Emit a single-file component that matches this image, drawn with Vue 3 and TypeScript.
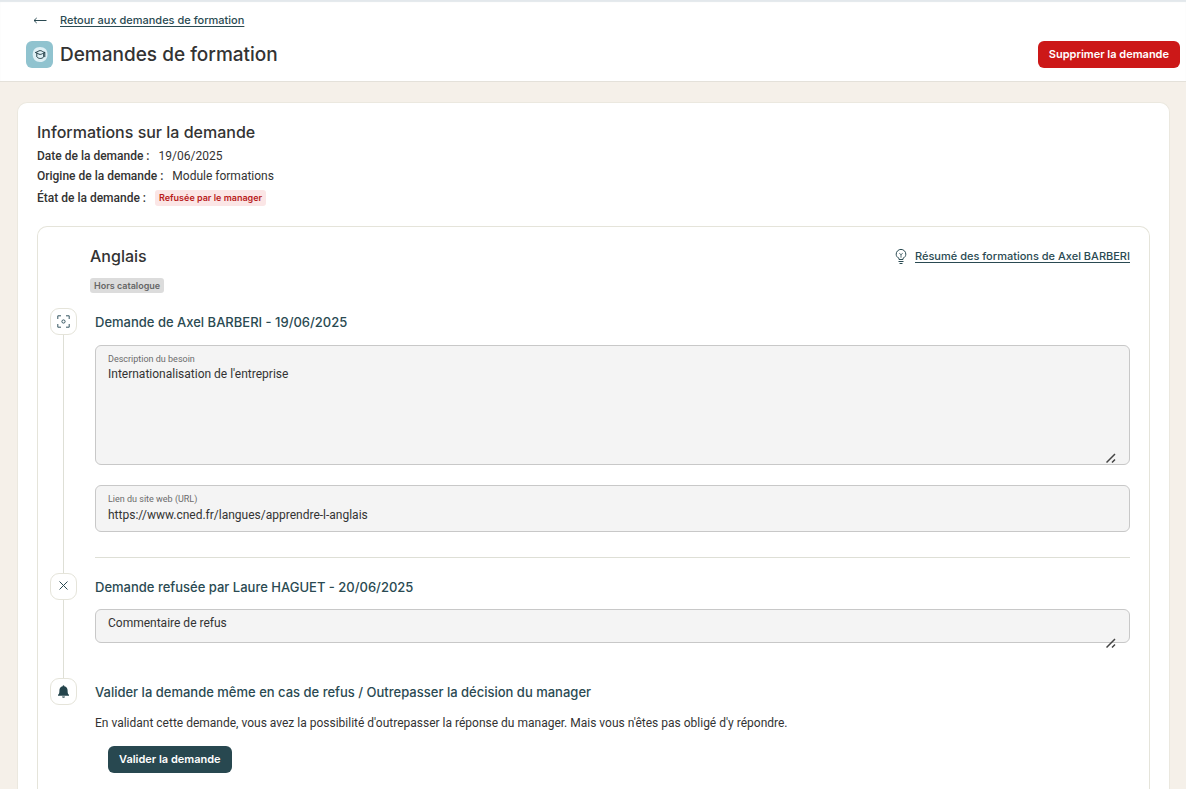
<script setup lang="ts">
interface Info {
  label: string
  value: string
  tag?: boolean
}

const infos: Info[] = [
  { label: 'Date de la demande :', value: '19/06/2025' },
  { label: 'Origine de la demande :', value: 'Module formations' },
  { label: 'État de la demande :', value: 'Refusée par le manager', tag: true },
]
</script>

<template>
  <div class="page">
    <header class="header">
      <nav class="back">
        <svg width="14" height="9" viewBox="0 0 14 9" fill="none" stroke="#2a4a52" aria-hidden="true">
          <path d="M13.500 4.500H1M3.700 2L1 4.500l2.700 2.500" />
        </svg>
        <a href="#">Retour aux demandes de formation</a>
      </nav>
      <div class="title-row">
        <span class="logo">
          <svg width="27" height="27" viewBox="0 0 27 27" fill="none" aria-hidden="true">
            <path d="M14 6c4.800 0 7.500 3 7.500 7.400S18.600 21 14 21s-7.300-3-7.300-7.500S9.200 6 14 6z" fill="#dff0f5" />
            <path d="M9.300 11.500c2.500-.5 3.200-1.900 4.900-1.900s2.400 1.400 4.800 1.900c-2.300.5-3 1.900-4.800 1.900s-2.500-1.400-4.900-1.900z" stroke="#243f47" stroke-linejoin="round" />
            <path d="M10.800 12.500v3.400c1.900 2.100 5.100 2.100 6.900 0v-3.400M18.800 11.500v4.200" stroke="#243f47" stroke-linecap="round" />
          </svg>
        </span>
        <h1>Demandes de formation</h1>
        <button type="button" class="btn danger">Supprimer la demande</button>
      </div>
    </header>

    <main class="card">
      <h2>Informations sur la demande</h2>
      <dl class="infos">
        <div v-for="info in infos" :key="info.label" class="info">
          <dt>{{ info.label }}</dt>
          <dd :class="{ refused: info.tag }">{{ info.value }}</dd>
        </div>
      </dl>

      <section class="request">
        <div class="request-head">
          <h2>Anglais</h2>
          <a href="#" class="summary">
            <svg width="12" height="16" viewBox="0 0 12 16" fill="none" stroke="#2a4a52" aria-hidden="true">
              <path d="M4 11.500V10.300C2.200 9.500 1.200 8 1.200 6.200a4.800 4.800 0 0 1 9.600 0c0 1.800-1 3.300-2.800 4.100v1.200zM3.500 13.500h5M4.500 15.500h3" />
              <path d="M4.300 5.300L6 6.700l1.700-1.400M6 6.700v3" stroke-width=".8" />
            </svg>
            <span>Résumé des formations de Axel BARBERI</span>
          </a>
        </div>
        <span class="catalog">Hors catalogue</span>

        <ol class="steps">
          <li class="step">
            <div class="rail">
              <span class="marker">
                <svg width="13" height="13" viewBox="0 0 13 13" fill="none" stroke="#365661" aria-hidden="true">
                  <path d="M.8 4V.8H4M9 .8h3.200V4M12.200 9v3.200H9M4 12.200H.8V9" />
                  <circle cx="6.500" cy="6.500" r="1.600" />
                </svg>
              </span>
            </div>
            <div class="body divided">
              <h3>Demande de Axel BARBERI - 19/06/2025</h3>
              <div class="field tall">
                <label for="need">Description du besoin</label>
                <textarea id="need" readonly>Internationalisation de l'entreprise</textarea>
                <svg class="grip" width="10" height="10" viewBox="0 0 10 10" stroke="#444" stroke-width="1.500" aria-hidden="true">
                  <path d="M.5 9.500l8.500-8.500M6 9.500l3-3" />
                </svg>
              </div>
              <div class="field">
                <label for="url">Lien du site web (URL)</label>
                <input id="url" type="url" value="https://www.cned.fr/langues/apprendre-l-anglais" readonly />
              </div>
            </div>
          </li>

          <li class="step">
            <div class="rail">
              <span class="marker">
                <svg width="9" height="11" viewBox="0 0 9 11" fill="none" stroke="#2a4a52" aria-hidden="true">
                  <path d="M.5.500l8 8M8.500.500l-8 8" />
                </svg>
              </span>
            </div>
            <div class="body">
              <h3 id="refusal">Demande refusée par Laure HAGUET - 20/06/2025</h3>
              <div class="field short">
                <textarea aria-labelledby="refusal" readonly>Commentaire de refus</textarea>
                <svg class="grip" width="10" height="10" viewBox="0 0 10 10" stroke="#444" stroke-width="1.500" aria-hidden="true">
                  <path d="M.5 9.500l8.500-8.500M6 9.500l3-3" />
                </svg>
              </div>
            </div>
          </li>

          <li class="step">
            <div class="rail">
              <span class="marker">
                <svg width="11" height="13" viewBox="0 0 11 13" fill="#24444c" aria-hidden="true">
                  <path d="M4.700 1a.8.8 0 0 1 1.600 0v.3c2.200.4 3.300 2 3.300 4.100 0 2.600.4 3.600 1.400 4.400v.9H0v-.9c1-.8 1.400-1.800 1.400-4.400 0-2.100 1.100-3.700 3.300-4.100zM4 11.600h3a1.500 1.200 0 0 1-3 0z" />
                </svg>
              </span>
            </div>
            <div class="body">
              <h3>Valider la demande même en cas de refus / Outrepasser la décision du manager</h3>
              <p>En validant cette demande, vous avez la possibilité d'outrepasser la réponse du manager. Mais vous n'êtes pas obligé d'y répondre.</p>
              <button type="button" class="btn primary">Valider la demande</button>
            </div>
          </li>
        </ol>
      </section>
    </main>
  </div>
</template>

<style>
body {
  margin: 0;
  background: #f5f0e9;
}
html {
  overflow: hidden;
}
</style>

<style scoped>
.page {
  --display: Inter, 'Liberation Sans', sans-serif;
  --text: Roboto, 'Liberation Sans', sans-serif;
  --teal: #2a4a52;
  --line: #e5e4da;
  min-height: 100vh;
  box-sizing: border-box;
  font: 12px/16px var(--text);
  color: #333;
}
.page * {
  box-sizing: border-box;
}
h1, h2, h3, p, dl, dd, ol {
  margin: 0;
  padding: 0;
}
.header {
  padding: 10px 6px 13px 26px;
  background: #fff;
  border-bottom: 1px solid #e4e1da;
  box-shadow: inset 0 2px 1px #e3e8ec;
}
.back {
  display: flex;
  align-items: center;
  gap: 13px;
  padding-left: 7px;
  height: 20px;
}
.back a,
.summary {
  color: var(--teal);
  font: 500 11px/16px var(--display);
  text-underline-offset: 2px;
}
.title-row {
  display: flex;
  align-items: center;
  gap: 7px;
  margin-top: 11px;
}
.logo {
  width: 27px;
  height: 27px;
  border-radius: 6px;
  background: #90c3cf;
}
.logo svg {
  display: block;
}
h1 {
  flex: 1;
  font: 500 19px/27px var(--display);
}
h2 {
  font: 500 16px/20px var(--display);
}
h3 {
  font: 500 13px/16px var(--display);
  color: var(--teal);
}
.btn {
  height: 27px;
  padding: 0 11px 2px;
  border: 0;
  border-radius: 6px;
  color: #fff;
  font: 600 11px/16px var(--display);
}
.danger {
  background: #cc1818;
}
.primary {
  background: #284850;
}
.card {
  margin: 20px 16px 0 17px;
  padding: 19px 19px 0;
  border: 1px solid #ebe8df;
  border-bottom: 0;
  border-radius: 10px 10px 0 0;
  background: #fff;
}
.infos {
  display: grid;
  gap: 4px;
  margin-top: 6px;
}
.info {
  display: flex;
  align-items: center;
  gap: 9px;
}
.info:last-child {
  margin-top: 2px;
}
dt {
  font-weight: 500;
}
.refused {
  padding: 0 4px;
  border-radius: 3px;
  background: #fbe6e6;
  color: #b91c1c;
  font: 600 9px/16px var(--display);
}
.request {
  margin-top: 20px;
  padding: 19px 19px 20px 12px;
  border: 1px solid var(--line);
  border-bottom: 0;
  border-radius: 10px 10px 0 0;
}
.request-head {
  display: flex;
  align-items: center;
  justify-content: space-between;
  padding-left: 40px;
}
.summary {
  display: flex;
  align-items: center;
  gap: 8px;
}
.catalog {
  display: block;
  width: fit-content;
  margin: 12px 0 0 40px;
  padding: 0 4px;
  border-radius: 3px;
  background: #dcdcdc;
  color: #666;
  font: 600 9px/15px var(--display);
}
.steps {
  margin-top: 15px;
  list-style: none;
}
.step {
  display: grid;
  grid-template-columns: 27px 1fr;
  gap: 18px;
}
.rail {
  display: flex;
  flex-direction: column;
  align-items: center;
}
.step:not(:last-child) .rail::after {
  content: '';
  flex: 1;
  width: 1px;
  background: #dedfd6;
}
.marker {
  display: grid;
  place-items: center;
  width: 27px;
  height: 27px;
  border: 1px solid var(--line);
  border-radius: 9px;
}
.body {
  padding: 6px 0 35px;
}
.divided {
  padding-bottom: 15px;
}
.divided::after {
  content: '';
  display: block;
  margin-top: 25px;
  border-top: 1px solid #dedfd6;
}
.field {
  position: relative;
  display: flex;
  flex-direction: column;
  height: 47px;
  margin-top: 20px;
  padding: 7px 12px 0;
  border: 1px solid #c8c8c8;
  border-radius: 6px;
  background: #f4f4f4;
}
.tall {
  height: 120px;
  margin-top: 15px;
}
.short {
  height: 34px;
  margin-top: 14px;
  padding-top: 5px;
}
.field label {
  color: #6b6b6b;
  font-size: 9px;
  line-height: 12px;
}
.field textarea,
.field input {
  width: 100%;
  margin: 0;
  padding: 0;
  border: 0;
  outline: 0;
  background: none;
  color: #333;
  font: 12px/16px var(--text);
  resize: none;
}
.field textarea {
  flex: 1;
  min-height: 0;
  overflow: hidden;
}
.tall textarea {
  padding-top: 1px;
}
.field input {
  height: 20px;
}
.grip {
  position: absolute;
  right: 13px;
  bottom: 1px;
}
.short .grip {
  bottom: -6px;
}
.body p {
  margin: 15px 0;
}
.body .btn {
  display: block;
  margin-left: 13px;
}
</style>
